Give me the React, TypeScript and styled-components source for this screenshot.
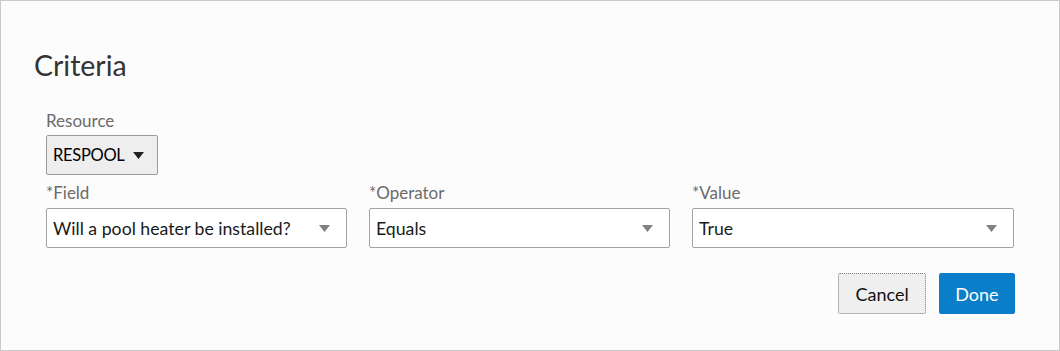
import React from "react";
import styled, { createGlobalStyle } from "styled-components";

const GlobalStyle = createGlobalStyle`
  body {
    margin: 0;
    background: #ffffff;
    font-family: Lato, "Open Sans", sans-serif;
  }
`;

const Panel = styled.div`
  box-sizing: border-box;
  width: 1060px;
  height: 351px;
  border: 1px solid #c9c9c9;
  background: #fcfcfc;
  padding: 0 45px;
`;

const Title = styled.h1`
  margin: 46px 0 0 -12px;
  font-size: 28.5px;
  line-height: 36px;
  font-weight: 400;
  color: #333333;
`;

const Label = styled.div`
  font-size: 17px;
  line-height: 22px;
  color: #6b6b6b;
`;

const ResourceBlock = styled.div`
  margin-top: 27px;
  display: flex;
  flex-direction: column;
  align-items: flex-start;
  gap: 3px;
`;

const ResourceButton = styled.button`
  box-sizing: border-box;
  height: 40px;
  padding: 0 13px 0 6px;
  display: flex;
  align-items: center;
  gap: 8px;
  background: #eeeeee;
  border: 1px solid #9a9a9a;
  border-radius: 2px;
  font-family: inherit;
  font-size: 16.5px;
  letter-spacing: -0.3px;
  color: #000000;
`;

const FieldRow = styled.div`
  margin-top: 7px;
  display: grid;
  grid-template-columns: 301px 301px 322px;
  column-gap: 22px;
`;

const Field = styled.div`
  display: flex;
  flex-direction: column;
  gap: 4px;
`;

const Select = styled.div`
  box-sizing: border-box;
  height: 40px;
  padding: 0 16px 0 6px;
  display: flex;
  align-items: center;
  justify-content: space-between;
  background: #ffffff;
  border: 1px solid #a3a3a3;
  border-radius: 2px;
  font-size: 17.7px;
  color: #1a1a1a;
`;

const Caret = ({ color }: { color: string }) => (
  <svg width="11" height="7" viewBox="0 0 11 7">
    <path d="M0 0 L11 0 L5.5 7 Z" fill={color} />
  </svg>
);

const Actions = styled.div`
  margin-top: 25px;
  margin-right: -1px;
  display: flex;
  justify-content: flex-end;
  gap: 13px;
`;

const Button = styled.button<{ $primary?: boolean }>`
  box-sizing: border-box;
  height: 41px;
  padding: 0 ${(p) => (p.$primary ? "15.5px" : "16px")};
  border-radius: 2px;
  font-family: inherit;
  font-size: 18px;
  color: ${(p) => (p.$primary ? "#ffffff" : "#111111")};
  background: ${(p) => (p.$primary ? "#0a7ec8" : "#efefef")};
  border: ${(p) => (p.$primary ? "1px solid #0a7ec8" : "1px dotted #777777")};
`;

export default function App() {
  return (
    <>
      <GlobalStyle />
      <Panel>
        <Title>Criteria</Title>
        <ResourceBlock>
          <Label>Resource</Label>
          <ResourceButton>
            RESPOOL
            <Caret color="#222222" />
          </ResourceButton>
        </ResourceBlock>
        <FieldRow>
          <Field>
            <Label>*Field</Label>
            <Select>
              Will a pool heater be installed?
              <Caret color="#808080" />
            </Select>
          </Field>
          <Field>
            <Label>*Operator</Label>
            <Select>
              Equals
              <Caret color="#808080" />
            </Select>
          </Field>
          <Field>
            <Label>*Value</Label>
            <Select>
              True
              <Caret color="#808080" />
            </Select>
          </Field>
        </FieldRow>
        <Actions>
          <Button>Cancel</Button>
          <Button $primary>Done</Button>
        </Actions>
      </Panel>
    </>
  );
}
